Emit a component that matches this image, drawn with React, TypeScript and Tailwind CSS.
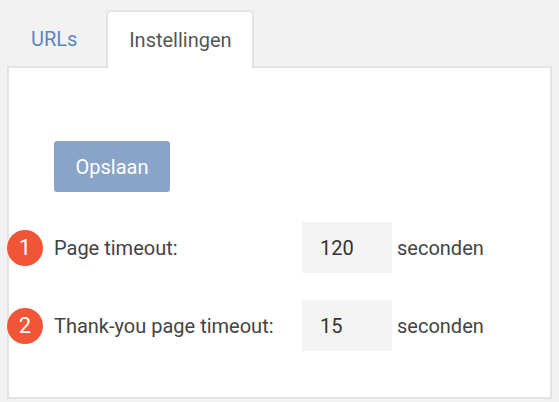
import React from "react";

function Badge({ n }: { n: number }) {
  return (
    <span className="absolute left-[-2px] top-1/2 -translate-y-1/2 flex size-[36px] items-center justify-center rounded-full bg-[#f05537] text-[22px] leading-none text-white ring-1 ring-white/60">
      {n}
    </span>
  );
}

function Row({ n, label, value }: { n: number; label: string; value: string }) {
  return (
    <div className="relative flex items-center">
      <Badge n={n} />
      <div className="w-[293px] pl-[45px] text-[20px] text-[#444]">{label}</div>
      <div className="flex h-[51px] w-[90px] items-center bg-[#f4f4f4] pl-[18px] text-[20px] text-[#333]">
        {value}
      </div>
      <span className="ml-[5px] text-[20px] text-[#444]">seconden</span>
    </div>
  );
}

export default function App() {
  return (
    <div
      className="min-h-screen w-[559px] h-[402px] overflow-hidden bg-[#f2f2f2] pl-[7px] pt-[10px]"
      style={{ fontFamily: "Roboto, 'Noto Sans', sans-serif" }}
    >
      {/* Tabs */}
      <div className="relative z-10 -mb-[2px] ml-[1px] flex items-end gap-[6px]">
        <button className="flex h-[58px] items-center px-[23px] text-[20px] text-[#5b86c5]">
          URLs
        </button>
        <button className="flex h-[58px] w-[148px] items-center justify-center rounded-t-[5px] border-2 border-b-0 border-[#e3e3e3] bg-white text-[20px] text-[#555]">
          Instellingen
        </button>
      </div>

      {/* Panel */}
      <div className="h-[333px] w-[545px] border-2 border-[#e3e3e3] bg-white pt-[73px]">
        <button className="ml-[45px] h-[51px] w-[116px] rounded-[3px] bg-[#8aa4c8] text-[20px] text-white">
          Opslaan
        </button>
        <div className="mt-[30px] flex flex-col gap-[27px]">
          <Row n={1} label="Page timeout:" value="120" />
          <Row n={2} label="Thank-you page timeout:" value="15" />
        </div>
      </div>
    </div>
  );
}
